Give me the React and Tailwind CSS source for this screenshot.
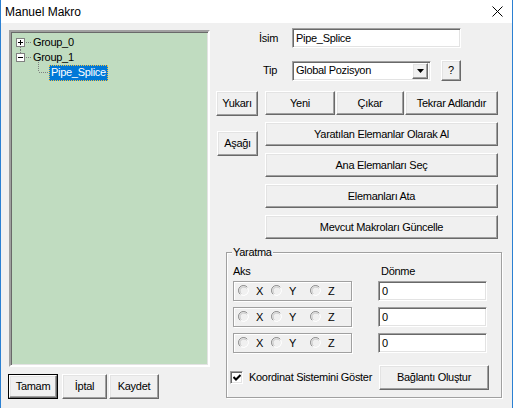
import React from "react";

const btn =
  "flex items-center justify-center bg-[#f0f0f0] text-black border border-t-white border-l-white border-b-[#696969] border-r-[#696969] shadow-[inset_-1px_-1px_0_#a0a0a0,inset_1px_1px_0_#e3e3e3]";
const sunken =
  "bg-white border border-t-[#a0a0a0] border-l-[#a0a0a0] border-b-white border-r-white shadow-[inset_1px_1px_0_#696969,inset_-1px_-1px_0_#e3e3e3]";
const groove = "border border-[#a0a0a0] shadow-[1px_1px_0_#fff,inset_1px_1px_0_#fff]";

function TreeBox({ open, lineDown, lineUp }) {
  return (
    <svg width="16" height="15" className="shrink-0 overflow-visible" shapeRendering="crispEdges">
      {lineUp && <line x1="4.5" y1="0" x2="4.5" y2="3" stroke="#808080" strokeDasharray="1 1" />}
      {lineDown && <line x1="4.5" y1="12" x2="4.5" y2="15" stroke="#808080" strokeDasharray="1 1" />}
      <rect x="0.5" y="3.5" width="8" height="8" fill="#fff" stroke="#808080" />
      <line x1="2" y1="7.5" x2="7" y2="7.5" stroke="#000" />
      {!open && <line x1="4.5" y1="5" x2="4.5" y2="10" stroke="#000" />}
      <line x1="10" y1="7.5" x2="15" y2="7.5" stroke="#808080" strokeDasharray="1 1" />
    </svg>
  );
}

function Radio() {
  return (
    <svg width="12" height="12" className="shrink-0">
      <circle cx="6" cy="6" r="5" fill="#f0f0f0" />
      <path d="M9.5 2.5 A5 5 0 1 0 2.5 9.5" fill="none" stroke="#8a8a8a" strokeWidth="1" />
      <path d="M8.6 3.4 A3.7 3.7 0 1 0 3.4 8.6" fill="none" stroke="#c8c8c8" strokeWidth="1" />
      <path d="M2.5 9.5 A5 5 0 0 0 9.5 2.5" fill="none" stroke="#ffffff" strokeWidth="1" />
    </svg>
  );
}

function AxisBox() {
  return (
    <div className={`${groove} h-[20px] w-[119px] flex items-center`}>
      <div className="flex items-center ml-[4px]">
        <Radio />
        <span className="ml-[6px]">X</span>
      </div>
      <div className="flex items-center ml-[8px]">
        <Radio />
        <span className="ml-[6px]">Y</span>
      </div>
      <div className="flex items-center ml-[14px]">
        <Radio />
        <span className="ml-[6px]">Z</span>
      </div>
    </div>
  );
}

export default function App() {
  return (
    <div className="w-[513px] h-[408px] overflow-hidden bg-[#f0f0f0] border-x border-[#2b80d2] flex flex-col font-['Liberation_Sans',Arial,sans-serif] text-[11px] tracking-[-0.3px] text-black">
      {/* Title bar */}
      <div className="h-[23px] bg-white flex items-center justify-between pl-[4px] pr-[9px] shrink-0">
        <span className="text-[12px] tracking-normal">Manuel Makro</span>
        <svg width="11" height="11" viewBox="0 0 11 11">
          <line x1="0.5" y1="0.5" x2="10.5" y2="10.5" stroke="#000" strokeWidth="1" />
          <line x1="10.5" y1="0.5" x2="0.5" y2="10.5" stroke="#000" strokeWidth="1" />
        </svg>
      </div>

      {/* Body */}
      <div className="flex pt-[5px]">
        {/* Left column */}
        <div className="flex flex-col ml-[7px] mt-[2px]">
          <div className="ml-[1px] w-[201px] h-[337px] bg-[#c0dcc0] border-2 border-t-[#a0a0a0] border-l-[#a0a0a0] border-b-white border-r-white shadow-[inset_1px_1px_0_#696969,inset_-1px_-1px_0_#e3e3e3] pt-[3px]">
            <div className="flex items-center h-[15px] pl-[5px]">
              <TreeBox open={false} lineDown />
              <span className="ml-[1px]">Group_0</span>
            </div>
            <div className="flex items-center h-[15px] pl-[5px]">
              <TreeBox open lineUp />
              <span className="ml-[1px]">Group_1</span>
            </div>
            <div className="flex items-center h-[15px] pl-[5px]">
              <svg width="33" height="15" className="shrink-0 overflow-visible" shapeRendering="crispEdges">
                <line x1="22.5" y1="-3" x2="22.5" y2="7" stroke="#808080" strokeDasharray="1 1" />
                <line x1="23" y1="7.5" x2="33" y2="7.5" stroke="#808080" strokeDasharray="1 1" />
              </svg>
              <span className="h-[16px] px-[2px] flex items-center bg-[#0078d7] text-white outline outline-1 outline-dotted outline-[#f0c040] -outline-offset-1">
                Pipe_Splice
              </span>
            </div>
          </div>
          <div className="flex mt-[7px] h-[25px]">
            <div className="w-[50px] h-full border border-black">
              <div className={`${btn} w-full h-full`}>Tamam</div>
            </div>
            <div className={`${btn} ml-[4px] w-[45px] h-full`}>İptal</div>
            <div className={`${btn} ml-[2px] w-[50px] h-full`}>Kaydet</div>
          </div>
        </div>

        {/* Right column */}
        <div className="flex flex-col ml-[5px]">
          <div className="flex items-center h-[20px]">
            <div className="w-[77px] text-right pr-[14px]">İsim</div>
            <div className={`${sunken} w-[169px] h-[20px] flex items-center pl-[3px]`}>Pipe_Splice</div>
          </div>
          <div className="flex items-center h-[21px] mt-[12px]">
            <div className="w-[77px] text-right pr-[15px]">Tip</div>
            <div className={`${sunken} w-[139px] h-[20px] flex items-center pl-[3px] pr-[2px] justify-between`}>
              <span>Global Pozisyon</span>
              <div className={`${btn} w-[16px] h-[16px]`}>
                <svg width="7" height="4" viewBox="0 0 7 4">
                  <path d="M0 0 H7 L3.5 4 Z" fill="#000" />
                </svg>
              </div>
            </div>
            <div className={`${btn} ml-[10px] w-[20px] h-[21px]`}>?</div>
          </div>

          <div className="flex mt-[10px]">
            <div className="flex flex-col w-[43px]">
              <div className={`${btn} ml-[1px] w-[42px] h-[25px]`}>Yukarı</div>
              <div className={`${btn} ml-[2px] w-[41px] h-[25px] mt-[15px]`}>Aşağı</div>
            </div>
            <div className="flex flex-col ml-[7px] w-[233px] gap-[7px]">
              <div className="flex h-[24px]">
                <div className={`${btn} w-[70px] h-full`}>Yeni</div>
                <div className={`${btn} ml-[1px] w-[68px] h-full`}>Çıkar</div>
                <div className={`${btn} ml-[1px] w-[93px] h-full`}>Tekrar Adlandır</div>
              </div>
              <div className={`${btn} h-[24px]`}>Yaratılan Elemanlar Olarak Al</div>
              <div className={`${btn} h-[24px]`}>Ana Elemanları Seç</div>
              <div className={`${btn} h-[24px]`}>Elemanları Ata</div>
              <div className={`${btn} h-[24px]`}>Mevcut Makroları Güncelle</div>
            </div>
          </div>

          {/* Group box */}
          <div className={`${groove} relative ml-[11px] mt-[13px] w-[276px] h-[146px] pt-[11px]`}>
            <span className="absolute -top-[7px] left-[5px] bg-[#f0f0f0] px-[1px] leading-[13px]">Yaratma</span>
            <div className="flex">
              <div className="flex flex-col ml-[6px] w-[119px]">
                <div className="h-[14px] flex items-center">Aks</div>
                <div className="flex flex-col gap-[6px] mt-[3px]">
                  <AxisBox />
                  <AxisBox />
                  <AxisBox />
                </div>
              </div>
              <div className="flex flex-col ml-[26px] w-[109px]">
                <div className="h-[14px] flex items-center pl-[3px]">Dönme</div>
                <div className="flex flex-col gap-[6px] mt-[3px]">
                  <div className={`${sunken} h-[20px] flex items-center pl-[3px]`}>0</div>
                  <div className={`${sunken} h-[20px] flex items-center pl-[3px]`}>0</div>
                  <div className={`${sunken} h-[20px] flex items-center pl-[3px]`}>0</div>
                </div>
              </div>
            </div>
            <div className="flex items-center mt-[12px]">
              <div className="flex items-center ml-[3px] w-[149px]">
                <div className={`${sunken} w-[13px] h-[13px] flex items-center justify-center`}>
                  <svg width="8" height="7" viewBox="0 0 8 7">
                    <path d="M0.5 3 L3 5.5 L7.5 1" fill="none" stroke="#000" strokeWidth="2" />
                  </svg>
                </div>
                <span className="ml-[6px] whitespace-nowrap">Koordinat Sistemini Göster</span>
              </div>
              <div className={`${btn} w-[110px] h-[25px]`}>Bağlantı Oluştur</div>
            </div>
          </div>
        </div>
      </div>
    </div>
  );
}
